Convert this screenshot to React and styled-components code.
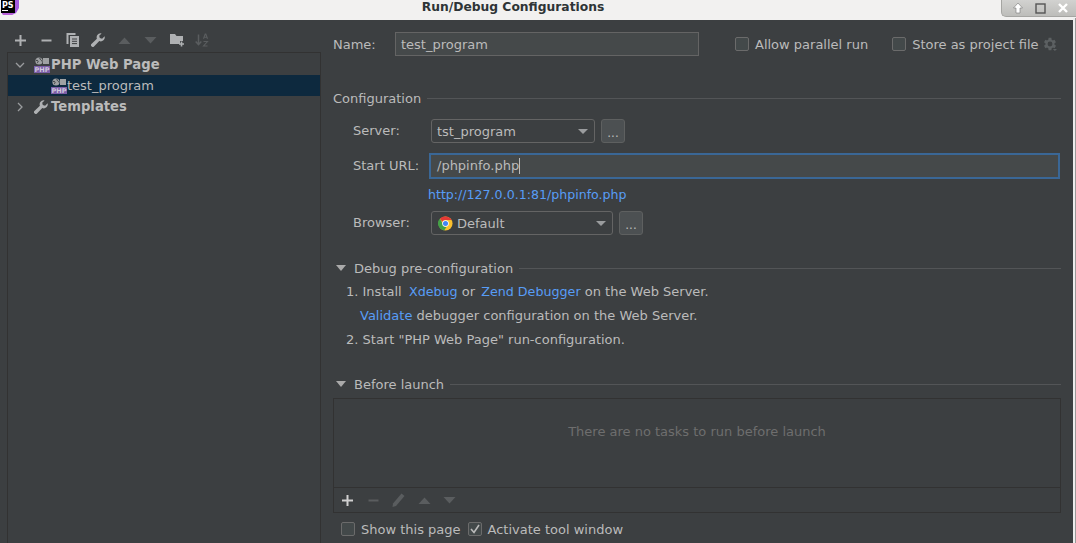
import React from 'react';
import styled, { createGlobalStyle } from 'styled-components';

const GlobalStyle = createGlobalStyle`
  html, body {
    margin: 0;
    padding: 0;
    background: #3c3f41;
    overflow: hidden;
  }
  * {
    box-sizing: border-box;
  }
`;

const Page = styled.div`
  position: relative;
  width: 1076px;
  height: 543px;
  display: flex;
  flex-direction: column;
  overflow: hidden;
  background: #3c3f41;
  color: #bbbbbb;
  font-family: "DejaVu Sans", sans-serif;
  font-size: 13px;
`;

const TitleBar = styled.div`
  position: relative;
  flex: none;
  height: 20px;
  padding-right: 50px;
  background: #f2f1f0;
  color: #2e3436;
  font-size: 12.3px;
  font-weight: bold;
  line-height: 14px;
  text-align: center;
`;

const AppLogo = styled.svg`
  position: absolute;
  left: 0;
  top: 0;
`;

const WindowControls = styled.div`
  position: absolute;
  right: 0;
  top: 0;
  width: 75px;
  height: 17px;
  display: flex;
  align-items: center;
  justify-content: space-around;
  padding: 0 2px 0 4px;
  background: linear-gradient(#d2d2d0, #bdbdba);
  border-left: 1px solid #a5a5a2;
  border-bottom: 1px solid #a5a5a2;
  border-bottom-left-radius: 5px;
`;

const Body = styled.div`
  flex: 1;
  display: flex;
  min-height: 0;
  padding-left: 7px;
`;

const LeftColumn = styled.div`
  flex: none;
  width: 314px;
  display: flex;
  flex-direction: column;
`;

const Toolbar = styled.div`
  flex: none;
  height: 32px;
  display: flex;
  align-items: center;
  padding: 8px 0 0 7px;
`;

const ToolGap = styled.span`
  flex: none;
  width: ${(p) => p.$width}px;
`;

const ToolIcon = styled.svg`
  flex: none;
  display: block;
  color: ${(p) => p.$color || (p.$dim ? '#5a5d5f' : '#afb1b3')};
`;

const ChromeMark = styled.svg`
  flex: none;
  display: block;
  margin-left: 1px;
`;

const Tree = styled.div`
  flex: 1;
  border: 1px solid #323232;
  border-bottom: none;
  padding-top: 1px;
`;

const TreeRow = styled.div`
  height: 21px;
  display: flex;
  align-items: center;
  padding-left: ${(p) => p.$indent}px;
  background: ${(p) => (p.$selected ? '#0d293e' : 'transparent')};
  font-size: ${(p) => (p.$bold ? '13.2px' : '13px')};
  font-weight: ${(p) => (p.$bold ? 'bold' : 'normal')};
`;

const TreeArrow = styled.svg`
  flex: none;
  margin-right: 9px;
`;

const TreeLabel = styled.span`
  margin-left: ${(p) => p.$offset}px;
`;

const PhpBadge = styled.svg`
  flex: none;
`;

const RightColumn = styled.div`
  flex: none;
  width: 728px;
  margin-left: 12px;
  display: flex;
  flex-direction: column;
`;

const NameRow = styled.div`
  flex: none;
  height: 24px;
  margin-top: 12px;
  display: flex;
  align-items: center;
`;

const NameLabel = styled.span`
  width: 62px;
  flex: none;
`;

const TextBox = styled.div`
  flex: none;
  width: ${(p) => p.$width}px;
  height: 24px;
  display: flex;
  align-items: center;
  padding-left: 5px;
  background: #45494a;
  border: 1px solid #646464;
`;

const CheckBox = styled.span`
  flex: none;
  width: 14px;
  height: 14px;
  display: flex;
  align-items: center;
  justify-content: center;
  border: 1px solid #6b6b6b;
  border-radius: 2px;
  background: #43494a;
  margin-right: 6px;
`;

const CheckLabel = styled.label`
  display: flex;
  align-items: center;
  margin-left: ${(p) => p.$offset}px;
  white-space: nowrap;
`;

const GearWrap = styled.span`
  margin-left: 4px;
  display: flex;
`;

const SectionHeader = styled.div`
  flex: none;
  height: 16px;
  margin-top: ${(p) => p.$top}px;
  display: flex;
  align-items: center;
  gap: 6px;
  &::after {
    content: '';
    flex: 1;
    height: 1px;
    background: #535557;
  }
`;

const Collapse = styled.span`
  flex: none;
  width: 0;
  height: 0;
  margin: 0 2px 0 3px;
  border-left: 5px solid transparent;
  border-right: 5px solid transparent;
  border-top: 6px solid #aaaaaa;
`;

const FormRow = styled.div`
  flex: none;
  height: 24px;
  margin-top: ${(p) => p.$top}px;
  display: flex;
  align-items: center;
`;

const FieldLabel = styled.span`
  flex: none;
  width: 97px;
  margin-bottom: 2px;
  padding-left: 20px;
  white-space: nowrap;
`;

const ComboBox = styled.div`
  flex: none;
  width: ${(p) => p.$width}px;
  height: 24px;
  margin-left: 1px;
  display: flex;
  align-items: center;
  padding: 0 6px 0 5px;
  border: 1px solid #646464;
  border-radius: 3px;
  background: #3c3f41;
`;

const ComboText = styled.span`
  flex: 1;
  display: flex;
  align-items: center;
  gap: 4px;
`;

const ComboArrow = styled.span`
  flex: none;
  width: 0;
  height: 0;
  border-left: 5px solid transparent;
  border-right: 5px solid transparent;
  border-top: 5px solid #9a9c9e;
`;

const BrowseButton = styled.div`
  flex: none;
  width: 24px;
  height: 24px;
  margin-left: 6px;
  display: flex;
  align-items: center;
  justify-content: center;
  padding-top: 3px;
  background: #4c5052;
  border: 1px solid #5e6060;
  border-radius: 3px;
  font-size: 12px;
`;

const FocusedInput = styled.div`
  flex: none;
  width: 631px;
  height: 26px;
  margin: 0 0 0 -1px;
  display: flex;
  align-items: center;
  padding: 0 0 1px 6px;
  background: #45494a;
  border: 2px solid #3a6796;
`;

const Caret = styled.span`
  width: 1px;
  height: 16px;
  background: #bbbbbb;
`;

const Link = styled.a`
  color: #589df6;
  font-size: ${(p) => p.$size || 13}px;
  margin-left: ${(p) => p.$left || 0}px;
  white-space: pre;
`;

const UrlHint = styled(Link)`
  display: block;
  flex: none;
  height: 16px;
  line-height: 16px;
  margin: 9px 0 0 95px;
`;

const StepList = styled.div`
  flex: none;
  margin-top: 4px;
  padding-left: 13px;
`;

const Step = styled.div`
  height: 24px;
  line-height: 24px;
  white-space: pre;
  padding-left: ${(p) => p.$indent || 0}px;
`;

const TaskPanel = styled.div`
  flex: none;
  height: 115px;
  margin-top: 6px;
  display: flex;
  flex-direction: column;
  border: 1px solid #323232;
`;

const EmptyTasks = styled.div`
  flex: 1;
  display: flex;
  align-items: center;
  justify-content: center;
  padding-bottom: 24px;
  color: #6e6e6e;
  border-bottom: 1px solid #323232;
`;

const TaskToolbar = styled.div`
  flex: none;
  height: 24px;
  display: flex;
  align-items: center;
  padding-left: 7px;
  gap: 12.6px;
`;

const BottomRow = styled.div`
  flex: none;
  height: 16px;
  margin-top: 8px;
  display: flex;
  align-items: center;
`;

const RightEdge = styled.div`
  position: absolute;
  right: 0;
  top: 18px;
  bottom: 0;
  width: 3px;
  background: #ececec;
  border-right: 1px solid #9a9a9a;
`;

const Plus = ({ color }) => (
  <ToolIcon $color={color} width="13" height="13" viewBox="0 0 13 13">
    <path d="M1 6.5h11M6.5 1v11" stroke="currentColor" strokeWidth="2" fill="none" />
  </ToolIcon>
);

const Minus = ({ dim }) => (
  <ToolIcon $dim={dim} width="13" height="13" viewBox="0 0 13 13">
    <path d="M1.5 6.5h10" stroke="currentColor" strokeWidth="2" fill="none" />
  </ToolIcon>
);

const Copy = () => (
  <ToolIcon width="13" height="14" viewBox="0 0 13 14">
    <path d="M0.5 0h9v2h-7v9h-2z M4 3h9v11H4z" fill="currentColor" />
    <path d="M6 6h5M6 8.3h5M6 10.6h5" stroke="#3c3f41" strokeWidth="1" />
  </ToolIcon>
);

const Wrench = () => (
  <ToolIcon width="14" height="14" viewBox="0 0 14 14">
    <path d="M9.6 0.3a4 4 0 0 0-3.7 5.4L0.4 11a1.6 1.6 0 0 0 0 2.2l0.4 0.4a1.6 1.6 0 0 0 2.2 0l5.3-5.5a4 4 0 0 0 5.3-4.8l-2.5 2.4-2.3-0.6-0.6-2.3 2.4-2.4a4 4 0 0 0-1-.1z" fill="currentColor" />
  </ToolIcon>
);

const Arrow = ({ up }) => (
  <ToolIcon $dim width="13" height="7" viewBox="0 0 13 7">
    <path d={up ? 'M0.5 7L6.5 0.5 12.5 7z' : 'M0.5 0L6.5 6.5 12.5 0z'} fill="currentColor" />
  </ToolIcon>
);

const FolderPlus = () => (
  <ToolIcon width="15" height="14" viewBox="0 0 15 14">
    <path d="M0 1h5l1.5 2H13v5h-3v3H0z" fill="currentColor" />
    <path d="M11.5 8.5v5M9 11h5" stroke="currentColor" strokeWidth="1.6" fill="none" />
  </ToolIcon>
);

const SortAz = () => (
  <ToolIcon $dim width="14" height="14" viewBox="0 0 14 14">
    <path d="M3.5 1.5v10M0.7 8.5l2.8 3.2 2.8-3.2" stroke="currentColor" strokeWidth="1.5" fill="none" />
    <path d="M8.5 5.8l1.7-4.8h.6l1.7 4.8M9.2 4.2h2.6M8.5 8.5h4l-4 4.5h4" stroke="currentColor" strokeWidth="1.1" fill="none" />
  </ToolIcon>
);

const PhpIcon = () => (
  <PhpBadge width="16" height="16" viewBox="0 0 16 16">
    <circle cx="5" cy="4" r="3.6" fill="#9fa1a3" />
    <path d="M2 3.5c2-1 3 1.5 1 2.5M6 1c-1 1.5 2 2 2 3.5" stroke="#3c3f41" strokeWidth="1" fill="none" />
    <rect x="9" y="1" width="6" height="6" fill="#9fa1a3" />
    <rect x="0" y="9" width="16" height="7" fill="#7b5ea7" />
    <text x="8" y="15.2" fontSize="6.5" fontWeight="bold" textAnchor="middle" fill="#cfc8dc" fontFamily="DejaVu Sans">PHP</text>
  </PhpBadge>
);

const ChromeIcon = () => (
  <ChromeMark width="15" height="15" viewBox="0 0 16 16">
    <circle cx="8" cy="8" r="7.5" fill="#fbc02d" />
    <path d="M8 .5a7.5 7.5 0 0 1 6.5 3.75H8a3.75 3.75 0 0 0-3.3 2L2 2.9A7.5 7.5 0 0 1 8 .5z" fill="#e53935" />
    <path d="M2 2.9l3 5.2 .1.1A3.75 3.75 0 0 0 9.1 11.6l-2.6 3.8A7.5 7.5 0 0 1 2 2.9z" fill="#43a047" />
    <circle cx="8" cy="8" r="3.5" fill="#fff" />
    <circle cx="8" cy="8" r="2.7" fill="#4285f4" />
  </ChromeMark>
);

const Check = () => (
  <svg width="10" height="10" viewBox="0 0 10 10">
    <path d="M1 5l3 3.5L9 1" stroke="#bbbbbb" strokeWidth="1.6" fill="none" />
  </svg>
);

const Gear = () => (
  <svg width="14" height="14" viewBox="3 2 20 20">
    <path fill="#5c6062" d="M19.4 13a7.5 7.5 0 0 0 0-2l2.1-1.6-2-3.5-2.5 1a7.5 7.5 0 0 0-1.7-1L15 3.2h-4l-.4 2.7a7.5 7.5 0 0 0-1.7 1l-2.5-1-2 3.5L6.5 11a7.5 7.5 0 0 0 0 2l-2.1 1.6 2 3.5 2.5-1a7.5 7.5 0 0 0 1.7 1l.4 2.7h4l.4-2.7a7.5 7.5 0 0 0 1.7-1l2.5 1 2-3.5zM13 15.5a3.5 3.5 0 1 1 0-7 3.5 3.5 0 0 1 0 7z" />
    <path fill="#5c6062" d="M17 19h6l-3 3z" />
  </svg>
);

function App() {
  return (
    <Page>
      <GlobalStyle />
      <TitleBar>
        <AppLogo width="20" height="18" viewBox="0 0 20 18">
          <path d="M14 0h5v8l-3 5-4 2z" fill="#a65be0" />
          <path d="M1 12l2 3h9l2-3z" fill="#b85fd8" />
          <rect x="1" y="0" width="14" height="13" fill="#000" />
          <rect x="2" y="10" width="6" height="1" fill="#fff" />
          <text x="2" y="8" fontSize="8" fontWeight="bold" fill="#fff" fontFamily="DejaVu Sans">PS</text>
        </AppLogo>
        Run/Debug Configurations
        <WindowControls>
          <svg width="12" height="12" viewBox="0 0 12 12">
            <path d="M6 1L1.5 6H4v5h4V6h2.5z" fill="#fff" stroke="#777" strokeWidth="0.6" />
          </svg>
          <svg width="11" height="11" viewBox="0 0 11 11">
            <rect x="1" y="1" width="9" height="9" fill="none" stroke="#555" strokeWidth="1.4" />
          </svg>
          <svg width="12" height="12" viewBox="0 0 12 12">
            <path d="M2 2l8 8M10 2l-8 8" stroke="#fff" strokeWidth="2.4" />
          </svg>
        </WindowControls>
      </TitleBar>
      <Body>
        <LeftColumn>
          <Toolbar>
            <Plus />
            <ToolGap $width={13} />
            <Minus />
            <ToolGap $width={13} />
            <Copy />
            <ToolGap $width={12} />
            <Wrench />
            <ToolGap $width={13} />
            <Arrow up />
            <ToolGap $width={13} />
            <Arrow />
            <ToolGap $width={13} />
            <FolderPlus />
            <ToolGap $width={10} />
            <SortAz />
          </Toolbar>
          <Tree>
            <TreeRow $indent={7} $bold>
              <TreeArrow width="10" height="10" viewBox="0 0 10 10">
                <path d="M1 3l4 4 4-4" stroke="#9a9c9e" strokeWidth="1.3" fill="none" />
              </TreeArrow>
              <PhpIcon />
              <TreeLabel $offset={1}>PHP Web Page</TreeLabel>
            </TreeRow>
            <TreeRow $indent={43} $selected>
              <PhpIcon />
              test_program
            </TreeRow>
            <TreeRow $indent={7} $bold>
              <TreeArrow width="10" height="10" viewBox="0 0 10 10">
                <path d="M3 1l4 4-4 4" stroke="#9a9c9e" strokeWidth="1.3" fill="none" />
              </TreeArrow>
              <Wrench />
              <TreeLabel $offset={3}>Templates</TreeLabel>
            </TreeRow>
          </Tree>
        </LeftColumn>
        <RightColumn>
          <NameRow>
            <NameLabel>Name:</NameLabel>
            <TextBox $width={304}>test_program</TextBox>
            <CheckLabel $offset={36}>
              <CheckBox />
              Allow parallel run
            </CheckLabel>
            <CheckLabel $offset={24}>
              <CheckBox />
              Store as project file
              <GearWrap><Gear /></GearWrap>
            </CheckLabel>
          </NameRow>
          <SectionHeader $top={34}>Configuration</SectionHeader>
          <FormRow $top={13}>
            <FieldLabel>Server:</FieldLabel>
            <ComboBox $width={164}>
              <ComboText>tst_program</ComboText>
              <ComboArrow />
            </ComboBox>
            <BrowseButton>...</BrowseButton>
          </FormRow>
          <FormRow $top={11}>
            <FieldLabel>Start URL:</FieldLabel>
            <FocusedInput>/phpinfo.php<Caret /></FocusedInput>
          </FormRow>
          <UrlHint $size={12.6}>http://127.0.0.1:81/phpinfo.php</UrlHint>
          <FormRow $top={8}>
            <FieldLabel>Browser:</FieldLabel>
            <ComboBox $width={182}>
              <ComboText>
                <ChromeIcon />
                Default
              </ComboText>
              <ComboArrow />
            </ComboBox>
            <BrowseButton>...</BrowseButton>
          </FormRow>
          <SectionHeader $top={25}>
            <Collapse />
            Debug pre-configuration
          </SectionHeader>
          <StepList>
            <Step>1. Install  <Link $size={12.7} $left={-1}>Xdebug</Link> or <Link $size={12.7} $left={2}>Zend Debugger</Link> on the Web Server.</Step>
            <Step $indent={14}><Link>Validate</Link> debugger configuration on the Web Server.</Step>
            <Step>2. Start "PHP Web Page" run-configuration.</Step>
          </StepList>
          <SectionHeader $top={24}>
            <Collapse />
            Before launch
          </SectionHeader>
          <TaskPanel>
            <EmptyTasks>There are no tasks to run before launch</EmptyTasks>
            <TaskToolbar>
              <Plus color="#d0d0d0" />
              <Minus dim />
              <ToolIcon $dim width="13" height="14" viewBox="0 0 13 14">
                <path d="M9.5 0.5l3 2.5L4 13 0.5 14 1 10.5z" fill="currentColor" />
              </ToolIcon>
              <Arrow up />
              <Arrow />
            </TaskToolbar>
          </TaskPanel>
          <BottomRow>
            <CheckLabel $offset={8}>
              <CheckBox />
              Show this page
            </CheckLabel>
            <CheckLabel $offset={7}>
              <CheckBox><Check /></CheckBox>
              Activate tool window
            </CheckLabel>
          </BottomRow>
        </RightColumn>
      </Body>
      <RightEdge />
    </Page>
  );
}

export default App;
